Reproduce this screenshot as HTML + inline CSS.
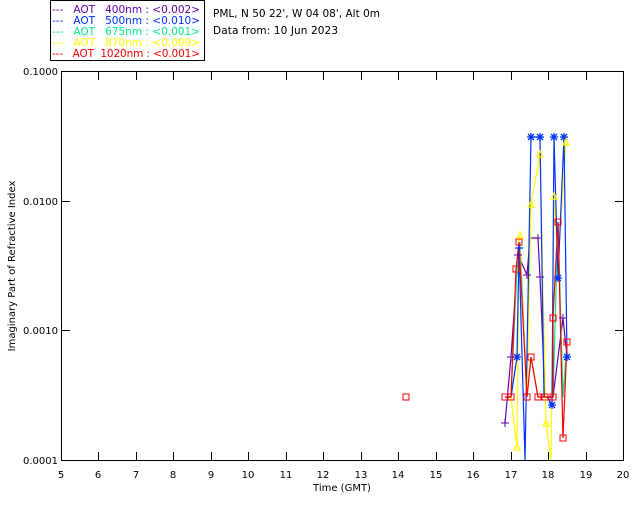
<!DOCTYPE html>
<html><head><meta charset="utf-8"><style>
html,body{margin:0;padding:0;background:#fff;}
svg{display:block;font-family:"DejaVu Sans","Liberation Sans",sans-serif;}
</style></head><body>
<svg width="640" height="512" viewBox="0 0 640 512" xmlns="http://www.w3.org/2000/svg" shape-rendering="crispEdges">
<rect width="640" height="512" fill="#fff"/>
<!-- legend -->
<rect x="50.5" y="0.5" width="154" height="60" fill="none" stroke="#000"/>
<g font-size="10.5">
<text x="52" y="13" fill="#6600aa" textLength="148" lengthAdjust="spacing">---&#160;&#160; AOT&#160;&#160; 400nm : &lt;0.002&gt;</text>
<text x="52" y="24" fill="#0033ff" textLength="148" lengthAdjust="spacing">---&#160;&#160; AOT&#160;&#160; 500nm : &lt;0.010&gt;</text>
<text x="52" y="35" fill="#00ee88" textLength="148" lengthAdjust="spacing">---&#160;&#160; AOT&#160;&#160; 675nm : &lt;0.001&gt;</text>
<text x="52" y="46" fill="#ffff00" textLength="148" lengthAdjust="spacing">---&#160;&#160; AOT&#160;&#160; 870nm : &lt;0.009&gt;</text>
<text x="52" y="57" fill="#ff0000" textLength="148" lengthAdjust="spacing">---&#160;&#160; AOT&#160; 1020nm : &lt;0.001&gt;</text>
</g>
<g font-size="10.5" fill="#000">
<text x="213" y="17" textLength="167" lengthAdjust="spacing">PML, N 50 22', W 04 08', Alt 0m</text>
<text x="213" y="34" textLength="125" lengthAdjust="spacing">Data from: 10 Jun 2023</text>
</g>
<!-- axes -->
<rect x="61.5" y="71.5" width="562" height="389" fill="none" stroke="#000"/>
<g stroke="#000">
<path d="M98.5 72v8M136.5 72v8M173.5 72v8M211.5 72v8M248.5 72v8M286.5 72v8M323.5 72v8M361.5 72v8M398.5 72v8M436.5 72v8M473.5 72v8M511.5 72v8M548.5 72v8M586.5 72v8"/>
<path d="M98.5 460v-8M136.5 460v-8M173.5 460v-8M211.5 460v-8M248.5 460v-8M286.5 460v-8M323.5 460v-8M361.5 460v-8M398.5 460v-8M436.5 460v-8M473.5 460v-8M511.5 460v-8M548.5 460v-8M586.5 460v-8"/>
<path d="M62 201.5h8M62 330.5h8M623 201.5h-8M623 330.5h-8"/>
</g>
<g font-size="10" fill="#000" text-anchor="end">
<text x="58" y="75">0.1000</text>
<text x="58" y="205">0.0100</text>
<text x="58" y="334">0.0010</text>
<text x="58" y="464">0.0001</text>
</g>
<g font-size="10" fill="#000" text-anchor="middle">
<text x="61" y="478">5</text><text x="98" y="478">6</text><text x="136" y="478">7</text><text x="173" y="478">8</text><text x="211" y="478">9</text><text x="248" y="478">10</text><text x="286" y="478">11</text><text x="323" y="478">12</text><text x="361" y="478">13</text><text x="398" y="478">14</text><text x="436" y="478">15</text><text x="473" y="478">16</text><text x="511" y="478">17</text><text x="548" y="478">18</text><text x="586" y="478">19</text><text x="623" y="478">20</text>
<text x="342" y="491">Time (GMT)</text>
<text transform="translate(15,266) rotate(-90)">Imaginary Part of Refractive Index</text>
</g>
<!-- data -->
<g fill="none" stroke-width="1.2" shape-rendering="auto">
<polyline stroke="#6600aa" points="505,423 511,357 518,255 527,275 530,238 538,238 540,277 545,397 553,397 563,318 567,357"/>
<polyline stroke="#00ee88" points="505,397 511,397 517,269 520,242 527,397 531,357 538,397 546,397 553,397 558,222 563,397 567,342"/>
<polyline stroke="#ffff00" points="505,397 511,397 517,447 519,235 527,397 531,204 540,154 546,423 551,460 554,196 558,264 566,142"/>
<polyline stroke="#0033ff" points="505,397 511,397 517,357 519,248 525,460 531,137 540,137 544,397 547,397 552,405 554,137 558,278 564,137 567,357"/>
<polyline stroke="#ff0000" points="505,397 511,397 516,269 519,242 527,397 531,357 538,397 546,397 553,397 553,318 558,222 563,438 567,342"/>
</g>
<g fill="none" stroke="#ff0000" stroke-width="1">
<rect x="403" y="394" width="6" height="6"/>
<rect x="502" y="394" width="6" height="6"/><rect x="508" y="394" width="6" height="6"/>
<rect x="524" y="394" width="6" height="6"/><rect x="535" y="394" width="6" height="6"/><rect x="542" y="394" width="6" height="6"/><rect x="550" y="394" width="6" height="6"/>
<rect x="528" y="354" width="6" height="6"/><rect x="513" y="266" width="6" height="6"/><rect x="516" y="239" width="6" height="6"/>
<rect x="550" y="315" width="6" height="6"/><rect x="555" y="219" width="6" height="6"/><rect x="560" y="435" width="6" height="6"/><rect x="564" y="339" width="6" height="6"/>
</g>
<g stroke="#0033ff" stroke-width="1.3" shape-rendering="auto">
<path d="M527 137h8M531 133v8M528 134l6 6M534 134l-6 6"/>
<path d="M536 137h8M540 133v8M537 134l6 6M543 134l-6 6"/>
<path d="M550 137h8M554 133v8M551 134l6 6M557 134l-6 6"/>
<path d="M560 137h8M564 133v8M561 134l6 6M567 134l-6 6"/>
<path d="M513 357h8M517 353v8M514 354l6 6M520 354l-6 6"/>
<path d="M563 357h8M567 353v8M564 354l6 6M570 354l-6 6"/>
<path d="M548 405h8M552 401v8M549 402l6 6M555 402l-6 6"/>
<path d="M554 278h8M558 274v8M555 275l6 6M561 275l-6 6"/>
<path d="M515 248h8M519 244v8"/>
</g>
<g stroke="#6600aa" stroke-width="1.3">
<path d="M501 423h8M505 419v8M507 357h8M511 353v8M514 255h8M518 251v8M523 275h8M527 271v8M534 238h8M538 234v8M536 277h8M540 273v8M559 318h8M563 314v8"/>
</g>
<g fill="none" stroke="#ffff00" stroke-width="1.2" shape-rendering="auto">
<path d="M514 450l3-6 3 6z M543 426l3-6 3 6z M517 238l3-6 3 6z M528 207l3-6 3 6z M537 157l3-6 3 6z M551 199l3-6 3 6z M563 145l3-6 3 6z"/>
</g>
</svg>
</body></html>
